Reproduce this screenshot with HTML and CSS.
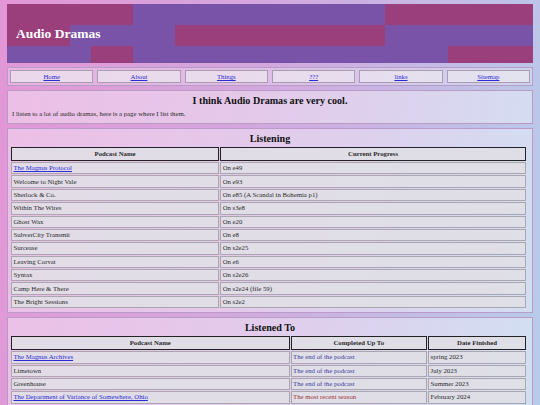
FILE: index.html
```html
<!DOCTYPE html>
<html lang="en">
<head>
  <meta charset="UTF-8">
  <meta name="viewport" content="width=device-width, initial-scale=1.0">
  <title>Audio Dramas</title>
  <link rel="stylesheet" href="styles.css">
</head>
<body>
  <header class="banner">
    <h1>Audio Dramas</h1>
  </header>

  <nav class="nav">
    <a class="nav-btn" href="#">Home</a>
    <a class="nav-btn" href="#">About</a>
    <a class="nav-btn" href="#">Things</a>
    <a class="nav-btn" href="#">???</a>
    <a class="nav-btn" href="#">links</a>
    <a class="nav-btn" href="#">Sitemap</a>
  </nav>

  <div class="box">
    <h2>I think Audio Dramas are very cool.</h2>
    <p>I listen to a lot of audio dramas, here is a page where I list them.</p>
  </div>

  <div class="box">
    <h2>Listening</h2>
    <table class="listening">
      <tr>
        <th>Podcast Name</th>
        <th>Current Progress</th>
      </tr>
      <tr><td><a href="#">The Magnus Protocol</a></td><td>On e49</td></tr>
      <tr><td>Welcome to Night Vale</td><td>On e93</td></tr>
      <tr><td>Sherlock &amp; Co.</td><td>On e85 (A Scandal in Bohemia p1)</td></tr>
      <tr><td>Within The Wires</td><td>On s3e8</td></tr>
      <tr><td>Ghost Wax</td><td>On e20</td></tr>
      <tr><td>SubverCity Transmit</td><td>On e8</td></tr>
      <tr><td>Surcease</td><td>On s2e25</td></tr>
      <tr><td>Leaving Corvat</td><td>On e6</td></tr>
      <tr><td>Syntax</td><td>On s2e26</td></tr>
      <tr><td>Camp Here &amp; There</td><td>On s2e24 (file 59)</td></tr>
      <tr><td>The Bright Sessions</td><td>On s2e2</td></tr>
    </table>
  </div>

  <div class="box">
    <h2>Listened To</h2>
    <table class="listened">
      <tr>
        <th>Podcast Name</th>
        <th>Completed Up To</th>
        <th>Date Finished</th>
      </tr>
      <tr><td><a href="#">The Magnus Archives</a></td><td class="done">The end of the podcast</td><td>spring 2023</td></tr>
      <tr><td>Limetown</td><td class="done">The end of the podcast</td><td>July 2023</td></tr>
      <tr><td>Greenhouse</td><td class="done">The end of the podcast</td><td>Summer 2023</td></tr>
      <tr><td><a href="#">The Department of Variance of Somewhere, Ohio</a></td><td class="ongoing">The most recent season</td><td>February 2024</td></tr>
      <tr><td>Wolf 359</td><td class="done">The end of the podcast</td><td>2024</td></tr>
    </table>
  </div>
</body>
</html>
```

FILE: styles.css
```css
html {
  background: linear-gradient(100deg, #e396d6 0%, #d3a8de 45%, #c3bce6 75%, #b6cdea 100%) fixed;
}
body {
  font-family: "Liberation Serif", "Times New Roman", serif;
  font-size: 6.75px;
  color: #2a2a2a;
  margin: 0;
  padding: 4px 7px;
}
a {
  color: #2b2bd6;
}

/* pixel block banner */
.banner {
  height: 59px;
  display: flex;
  align-items: center;
  padding-left: 9px;
  background:
    linear-gradient(to right, #9a3e7c 126px, #7853a8 126px 378px, #9a3e7c 378px) 0 0 / 100% 21px no-repeat,
    linear-gradient(to right, #9a3e7c 63px, #7853a8 63px 168px, #9a3e7c 168px 378px, #7853a8 378px) 0 21px / 100% 21px no-repeat,
    linear-gradient(to right, #7853a8 84px, #9a3e7c 84px 126px, #7853a8 126px 441px, #9a3e7c 441px) 0 42px / 100% 21px no-repeat;
}
.banner h1 {
  margin: 0;
  color: #fff;
  font-size: 13.5px;
}

.nav {
  margin-top: 4px;
  display: grid;
  grid-template-columns: repeat(6, 1fr);
  gap: 4px;
  padding: 2px;
  border: 1px solid #b59dc6;
  background: rgba(255, 255, 255, 0.25);
}
.nav-btn {
  display: block;
  text-align: center;
  line-height: 11px;
  border: 1px solid #ab9cb6;
  background: rgba(236, 232, 240, 0.7);
}

.box {
  margin-top: 4px;
  padding: 4px 5px 3px 2px;
  border: 1px solid #b99bc6;
  background: rgba(255, 255, 255, 0.38);
}
.box h2 {
  margin: 0 0 2px;
  padding-left: 3px;
  font-size: 10.1px;
  line-height: 11px;
  text-align: center;
  color: #111;
}
.box p {
  margin: 4px 0 2px;
  padding-left: 2px;
  line-height: 8px;
}

table {
  width: 100%;
  border-spacing: 1px;
}
th, td {
  background: rgba(224, 222, 230, 0.92);
  line-height: 8px;
}
th {
  border: 1px solid #222;
  padding: 2px 1.5px;
}
td {
  border: 1px solid #a9a6ae;
  padding: 1.2px 1.5px;
  text-align: left;
}
.listening th:first-child {
  width: 40.5%;
}
.listened th:first-child {
  width: 54.3%;
}
.listened th:nth-child(2) {
  width: 26.6%;
}
.done {
  color: #3b3b9e;
}
.ongoing {
  color: #a13434;
}
```
